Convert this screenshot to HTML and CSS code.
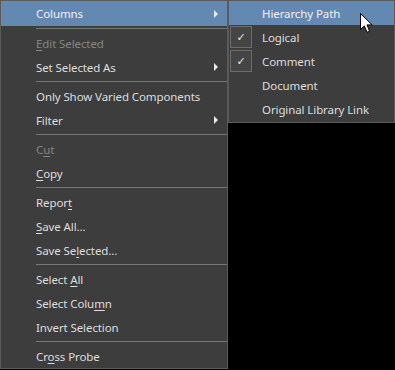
FILE: index.html
```html
<!DOCTYPE html>
<html lang="en">
<head>
  <meta charset="UTF-8">
  <title>Context menu</title>
  <link rel="stylesheet" href="styles.css">
</head>
<body>
  <div class="scene">
    <div class="menu">
      <div class="item active"><span>Columns</span><span class="arrow"></span></div>
      <div class="sep"></div>
      <div class="item disabled"><span><u>E</u>dit Selected</span></div>
      <div class="item"><span>Set Selected As</span><span class="arrow"></span></div>
      <div class="sep"></div>
      <div class="item"><span>Only Show Varied Components</span></div>
      <div class="item"><span>Filter</span><span class="arrow"></span></div>
      <div class="sep"></div>
      <div class="item disabled"><span>C<u>u</u>t</span></div>
      <div class="item"><span><u>C</u>opy</span></div>
      <div class="sep"></div>
      <div class="item"><span>Repor<u>t</u></span></div>
      <div class="item"><span><u>S</u>ave All...</span></div>
      <div class="item"><span>Save Se<u>l</u>ected...</span></div>
      <div class="sep"></div>
      <div class="item"><span>Select <u>A</u>ll</span></div>
      <div class="item"><span>Select Colu<u>m</u>n</span></div>
      <div class="item"><span>Invert Selection</span></div>
      <div class="sep"></div>
      <div class="item"><span>Cr<u>o</u>ss Probe</span></div>
    </div>

    <div class="submenu">
      <div class="sub-item active"><span class="check"></span><span>Hierarchy Path</span></div>
      <div class="sub-item"><span class="check on">&#10003;</span><span>Logical</span></div>
      <div class="sub-item"><span class="check on">&#10003;</span><span>Comment</span></div>
      <div class="sub-item"><span class="check"></span><span>Document</span></div>
      <div class="sub-item"><span class="check"></span><span>Original Library Link</span></div>
    </div>

    <svg class="cursor" width="14" height="22" viewBox="0 0 14 22">
      <path d="M0.5 0.5 L0.5 16.5 L4.3 12.9 L7 19.3 L9.6 18.2 L7 11.9 L12.2 11.9 Z" fill="#fff" stroke="#000" stroke-width="1"/>
    </svg>
  </div>
</body>
</html>
```

FILE: styles.css
```css
body {
  margin: 0;
  background: #000;
  font-family: "Noto Sans", "Open Sans", sans-serif;
  font-size: 11.5px;
  letter-spacing: -0.1px;
  color: #dedede;
}

.scene {
  display: flex;
  align-items: flex-start;
  width: 395px;
  height: 370px;
  position: relative;
}

.menu {
  width: 226px;
  background: #3d3d3d;
  border: 1px solid #5a5a5a;
}

.item {
  display: flex;
  align-items: center;
  height: 24px;
  padding-left: 35px;
  white-space: nowrap;
}

.item u, .sub-item u {
  text-decoration-thickness: 1px;
  text-underline-offset: 2px;
}

.item.active {
  background: #6388b2;
  color: #f2f2f2;
  height: 25px;
}

.item.disabled {
  color: #858585;
}

.arrow {
  margin-left: auto;
  margin-right: 9px;
  width: 0;
  height: 0;
  border-top: 4px solid transparent;
  border-bottom: 4px solid transparent;
  border-left: 4px solid #e8e8e8;
}

.sep {
  height: 1px;
  margin: 2px 0 2px 35px;
  background: #777;
}

.submenu {
  width: 165px;
  background: #3d3d3d;
  border: 1px solid #5a5a5a;
  padding: 0 0 1px;
}

.sub-item {
  display: flex;
  align-items: center;
  height: 24px;
  padding-left: 1px;
  white-space: nowrap;
}

.sub-item.active {
  background: #6388b2;
  color: #f2f2f2;
}

.check {
  width: 20px;
  height: 20px;
  margin-right: 10px;
  border: 1px solid transparent;
  display: flex;
  align-items: center;
  justify-content: center;
  font-family: "DejaVu Sans", sans-serif;
  font-size: 11px;
  color: #e6e6e6;
}

.check.on {
  border-color: #6b6b6b;
  background: #454545;
}

.cursor {
  position: absolute;
  left: 360px;
  top: 13px;
}
```
